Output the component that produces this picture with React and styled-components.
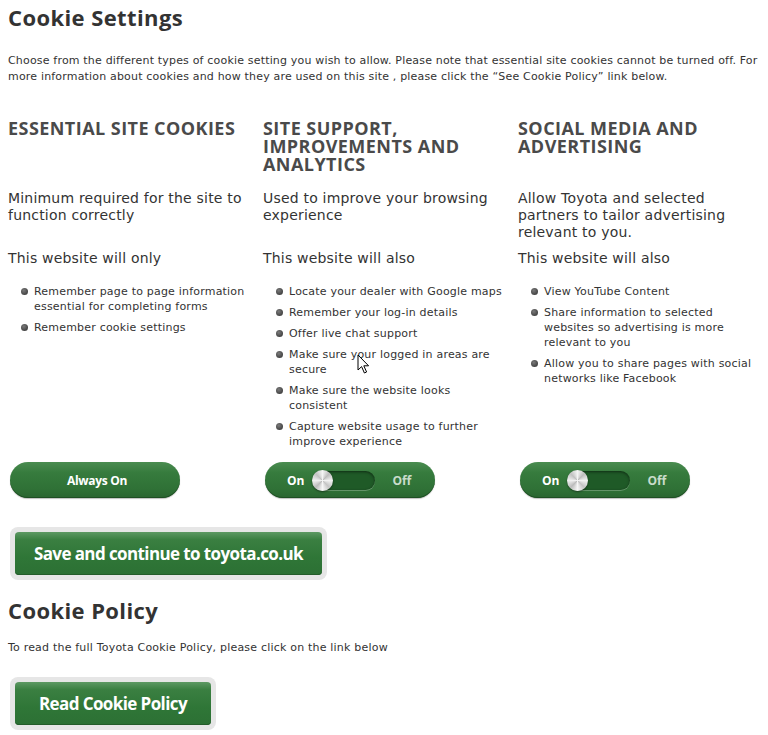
import styled, { createGlobalStyle } from 'styled-components';

const GlobalStyle = createGlobalStyle`
  html, body {
    margin: 0;
    padding: 0;
    background: #ffffff;
  }
  body {
    font-family: "DejaVu Sans", Verdana, sans-serif;
    color: #333333;
  }
`;

const columns = [
  {
    title: 'ESSENTIAL SITE COOKIES',
    description: 'Minimum required for the site to function correctly',
    lead: 'This website will only',
    items: [
      'Remember page to page information essential for completing forms',
      'Remember cookie settings',
    ],
    control: 'always',
  },
  {
    title: 'SITE SUPPORT, IMPROVEMENTS AND ANALYTICS',
    description: 'Used to improve your browsing experience',
    lead: 'This website will also',
    items: [
      'Locate your dealer with Google maps',
      'Remember your log-in details',
      'Offer live chat support',
      'Make sure your logged in areas are secure',
      'Make sure the website looks consistent',
      'Capture website usage to further improve experience',
    ],
    control: 'switch',
  },
  {
    title: 'SOCIAL MEDIA AND ADVERTISING',
    description: 'Allow Toyota and selected partners to tailor advertising relevant to you.',
    lead: 'This website will also',
    items: [
      'View YouTube Content',
      'Share information to selected websites so advertising is more relevant to you',
      'Allow you to share pages with social networks like Facebook',
    ],
    control: 'switch',
  },
];

const Switch = () => (
  <StyledSwitch role='switch' aria-checked='false'>
    <SwitchLabel>On</SwitchLabel>
    <SwitchTrack>
      <SwitchKnob />
    </SwitchTrack>
    <SwitchLabel dim>Off</SwitchLabel>
  </StyledSwitch>
);

const Cursor = () => (
  <StyledCursor width='14' height='21' viewBox='0 0 14 21'>
    <path
      d='M1 1 L1 16 L4.6 12.6 L7.4 19 L9.6 18 L6.8 11.8 L11.6 11.8 Z'
      fill='#ffffff'
      stroke='#000000'
      strokeWidth='1'
      strokeLinejoin='round'
    />
  </StyledCursor>
);

export default function App() {
  return (
    <>
      <GlobalStyle />
      <StyledPage>
        <StyledTitle>Cookie Settings</StyledTitle>
        <StyledIntro>
          Choose from the different types of cookie setting you wish to allow. Please note that
          essential site cookies cannot be turned off. For more information about cookies and how
          they are used on this site , please click the “See Cookie Policy” link below.
        </StyledIntro>

        <StyledColumns>
          {columns.map(col => (
            <StyledColumn key={col.title}>
              <StyledColumnTitle>{col.title}</StyledColumnTitle>
              <StyledDescription>{col.description}</StyledDescription>
              <StyledLead>{col.lead}</StyledLead>
              <StyledList>
                {col.items.map(item => (
                  <StyledItem key={item}>{item}</StyledItem>
                ))}
              </StyledList>
              {col.control === 'always' ? (
                <StyledAlwaysOn>Always On</StyledAlwaysOn>
              ) : (
                <Switch />
              )}
            </StyledColumn>
          ))}
        </StyledColumns>

        <StyledButtonFrame wide>
          <StyledButton>Save and continue to toyota.co.uk</StyledButton>
        </StyledButtonFrame>

        <StyledPolicyTitle>Cookie Policy</StyledPolicyTitle>
        <StyledPolicyText>
          To read the full Toyota Cookie Policy, please click on the link below
        </StyledPolicyText>

        <StyledButtonFrame>
          <StyledButton>Read Cookie Policy</StyledButton>
        </StyledButtonFrame>

        <Cursor />
      </StyledPage>
    </>
  );
}

const StyledPage = styled.div`
  position: relative;
  width: 768px;
  box-sizing: border-box;
  padding: 4px 6px 8px 8px;
`;

const StyledTitle = styled.h1`
  margin: 0;
  font-family: 'Open Sans', sans-serif;
  font-weight: 700;
  font-size: 22px;
  line-height: 26px;
  color: #333333;
  letter-spacing: 0.4px;
`;

const StyledIntro = styled.p`
  margin: 23px 0 0;
  font-size: 11px;
  line-height: 16px;
  letter-spacing: 0.18px;
  color: #333333;
`;

const StyledColumns = styled.div`
  display: grid;
  grid-template-columns: 245px 245px 1fr;
  column-gap: 10px;
  margin-top: 34px;
`;

const StyledColumn = styled.div`
  display: flex;
  flex-direction: column;
`;

const StyledColumnTitle = styled.h2`
  margin: 0;
  height: 54px;
  font-family: 'Open Sans', sans-serif;
  font-weight: 700;
  font-size: 18px;
  line-height: 18px;
  letter-spacing: 0.45px;
  color: #4a4a4a;
`;

const StyledDescription = styled.p`
  margin: 17px 0 0;
  height: 51px;
  font-size: 14px;
  line-height: 17px;
  letter-spacing: 0.2px;
  color: #333333;
`;

const StyledLead = styled.p`
  margin: 9px 0 0;
  font-size: 14px;
  line-height: 17px;
  letter-spacing: 0.2px;
  color: #333333;
`;

const StyledList = styled.ul`
  list-style: none;
  margin: 17px 0 7px;
  padding: 0 0 0 26px;
  max-width: 220px;
`;

const StyledItem = styled.li`
  position: relative;
  font-size: 11px;
  line-height: 15px;
  letter-spacing: 0.2px;
  color: #333333;
  margin-bottom: 6px;

  &::before {
    content: '';
    position: absolute;
    left: -13px;
    top: 4px;
    width: 7px;
    height: 7px;
    border-radius: 50%;
    background: radial-gradient(circle at 40% 35%, #7a7a7a, #444444 70%);
  }
`;

const pill = `
  box-sizing: border-box;
  width: 170px;
  height: 36px;
  margin: auto 0 0 2px;
  border-radius: 18px;
  background: linear-gradient(#4a8c50 0%, #367b3d 30%, #2f7136 75%, #2a6530 100%);
  box-shadow: inset 0 -1px 0 #1e4f23, 0 1px 1px rgba(0, 0, 0, 0.25);
  color: #ffffff;
  font-family: 'Open Sans', sans-serif;
  font-weight: 700;
  font-size: 12px;
`;

const StyledAlwaysOn = styled.div`
  ${pill}
  display: flex;
  align-items: center;
  justify-content: center;
  padding-left: 4px;
  letter-spacing: -0.3px;
`;

const StyledSwitch = styled.div`
  ${pill}
  display: flex;
  align-items: center;
  padding-left: 22px;
`;

const SwitchLabel = styled.span`
  color: ${({ dim }) => (dim ? '#c9dccb' : '#ffffff')};
  margin-left: ${({ dim }) => (dim ? '17px' : '0')};
`;

const SwitchTrack = styled.div`
  position: relative;
  box-sizing: border-box;
  width: 62px;
  height: 19px;
  margin-left: 9px;
  border-radius: 10px;
  background: #1f5a27;
  box-shadow: inset 0 1px 3px rgba(0, 0, 0, 0.5), 0 1px 0 rgba(255, 255, 255, 0.25);
`;

const SwitchKnob = styled.span`
  position: absolute;
  left: -1px;
  top: -1px;
  width: 21px;
  height: 21px;
  border-radius: 50%;
  background: conic-gradient(
    #f4f4f4 0deg,
    #bdbdbd 45deg,
    #f2f2f2 90deg,
    #c4c4c4 135deg,
    #f6f6f6 180deg,
    #bcbcbc 225deg,
    #f0f0f0 270deg,
    #c2c2c2 315deg,
    #f4f4f4 360deg
  );
  box-shadow: 0 1px 2px rgba(0, 0, 0, 0.45);
`;

const StyledButtonFrame = styled.div`
  box-sizing: border-box;
  width: ${({ wide }) => (wide ? '317px' : '206px')};
  margin: ${({ wide }) => (wide ? '29px 0 0 2px' : '21px 0 0 2px')};
  padding: 5px;
  border-radius: 8px;
  background: #e6e6e6;
`;

const StyledButton = styled.button`
  display: block;
  width: 100%;
  height: 43px;
  border: none;
  border-radius: 4px;
  background: linear-gradient(#5d9963 0%, #3a7f41 18%, #2f7637 60%, #2c7034 100%);
  box-shadow: inset 0 -1px 0 #245c2a;
  color: #ffffff;
  font-family: 'Open Sans', sans-serif;
  font-weight: 700;
  font-size: 17px;
  letter-spacing: -0.6px;
  cursor: pointer;
`;

const StyledPolicyTitle = styled.h1`
  margin: 17px 0 0;
  font-family: 'Open Sans', sans-serif;
  font-weight: 700;
  font-size: 22px;
  line-height: 26px;
  color: #333333;
  letter-spacing: 0.4px;
`;

const StyledPolicyText = styled.p`
  margin: 17px 0 0;
  font-size: 11px;
  line-height: 16px;
  letter-spacing: 0.2px;
  color: #333333;
`;

const StyledCursor = styled.svg`
  position: absolute;
  left: 357px;
  top: 354px;
  pointer-events: none;
`;
